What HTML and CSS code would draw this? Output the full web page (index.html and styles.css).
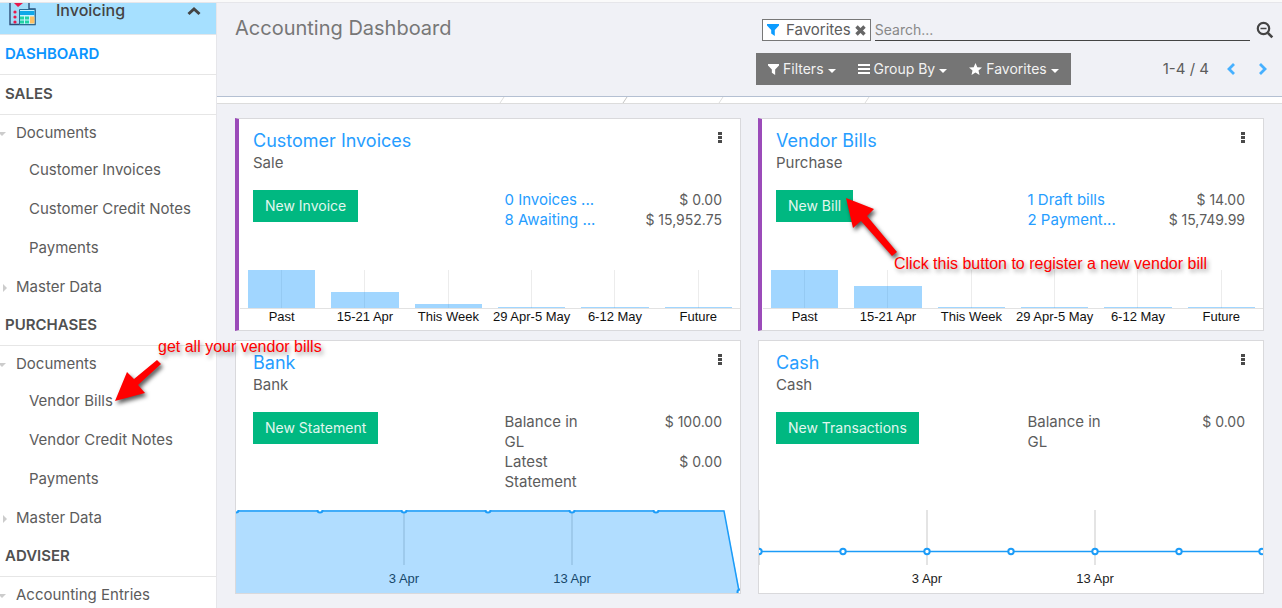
FILE: index.html
```html
<!DOCTYPE html>
<html lang="en">
<head>
<meta charset="utf-8">
<title>Accounting Dashboard</title>
<link rel="stylesheet" href="styles.css">
</head>
<body>
<div class="app">
  <nav class="sidebar">
    <button class="app-head" type="button">
      <svg class="app-icon" width="28" height="24" viewBox="0 0 28 24">
        <path d="M1 0V21.500H26V6H20V0" fill="#a3ddf8" stroke="#2b4d77" stroke-width="1.400"/>
        <path d="M5 0H14L9 4Z" fill="#e8174b"/>
        <g fill="#e8174b"><circle cx="6" cy="9" r="1.600"/><circle cx="6" cy="14" r="1.600"/><circle cx="6" cy="19" r="1.600"/></g>
        <path d="M10.500 21.500V6.500H26V21.500Z" fill="#c8f2ff" stroke="#2b6b95"/>
        <path d="M11 8H25.500V12H11Z" fill="#10a8e8"/>
        <g fill="#22d3a4"><path d="M11 13.500h4v3h-4zM16 13.500h4v3h-4zM11 17.500h4v3h-4zM16 17.500h4v3h-4z"/></g>
        <path d="M21 13.500h4.500v7H21z" fill="#ffc061"/>
      </svg>
      <span class="app-name">Invoicing</span>
      <svg width="14" height="10" viewBox="0 0 14 10"><path d="M1.500 8L7 3L12.500 8" fill="none" stroke="#444" stroke-width="3"/></svg>
    </button>
    <a class="section active" href="#">DASHBOARD</a>
    <a class="section" href="#">SALES</a>
    <a class="group open" href="#">Documents</a>
    <a class="item" href="#">Customer Invoices</a>
    <a class="item" href="#">Customer Credit Notes</a>
    <a class="item" href="#">Payments</a>
    <a class="group" href="#">Master Data</a>
    <a class="section" href="#">PURCHASES</a>
    <a class="group open" href="#">Documents</a>
    <a class="item" href="#">Vendor Bills</a>
    <a class="item" href="#">Vendor Credit Notes</a>
    <a class="item" href="#">Payments</a>
    <a class="group" href="#">Master Data</a>
    <a class="section" href="#">ADVISER</a>
    <a class="group open" href="#">Accounting Entries</a>
  </nav>

  <main class="main">
    <header class="control">
      <h1 class="page-title">Accounting Dashboard</h1>
      <div class="tools">
        <div class="search">
          <span class="facet">
            <svg width="12" height="12" viewBox="0 0 12 12"><path d="M0 0H12V1.500L7.800 6V12L4.200 9.500V6L0 1.500Z" fill="#0c9cff"/></svg>
            <span class="facet-name">Favorites</span>
            <button class="icon-btn" type="button" aria-label="Remove"><svg width="11" height="11" viewBox="0 0 11 11"><path d="M1.500 1.500L9.500 9.500M9.500 1.500L1.500 9.500" stroke="#666" stroke-width="3.400"/></svg></button>
          </span>
          <input class="search-input" type="text" placeholder="Search..." aria-label="Search">
          <button class="icon-btn zoom" type="button" aria-label="Advanced search"><svg width="18" height="18" viewBox="0 0 18 18" fill="none" stroke="#444"><circle cx="7.500" cy="7.500" r="5.700" stroke-width="2.200"/><path d="M4.500 7.500H10.500" stroke-width="1.500"/><path d="M11.800 11.800L16.300 16.300" stroke-width="2.600"/></svg></button>
        </div>
        <div class="options">
          <div class="filters">
            <button class="filter" type="button"><svg width="11" height="11" viewBox="0 0 12 12"><path d="M0 0H12V1.500L7.800 6V12L4.200 9.500V6L0 1.500Z" fill="#fff"/></svg>Filters<i class="caret"></i></button>
            <button class="filter" type="button"><svg width="12" height="10" viewBox="0 0 12 10"><path d="M0 1H12M0 5H12M0 9H12" stroke="#fff" stroke-width="2"/></svg>Group By<i class="caret"></i></button>
            <button class="filter" type="button"><svg width="13" height="12" viewBox="0 0 13 12"><path d="M6.500 0L8.300 4.200L13 4.600L9.500 7.500L10.500 12L6.500 9.600L2.500 12L3.500 7.500L0 4.600L4.700 4.200Z" fill="#fff"/></svg>Favorites<i class="caret"></i></button>
          </div>
          <div class="pager">
            <span class="count">1-4 / 4</span>
            <button class="icon-btn" type="button" aria-label="Previous"><svg width="9" height="12" viewBox="0 0 9 12"><path d="M7 1L2 6L7 11" fill="none" stroke="#46b0ff" stroke-width="2.800"/></svg></button>
            <button class="icon-btn next" type="button" aria-label="Next"><svg width="9" height="12" viewBox="0 0 9 12"><path d="M2 1L7 6L2 11" fill="none" stroke="#46b0ff" stroke-width="2.800"/></svg></button>
          </div>
        </div>
      </div>
    </header>
    <svg class="strip" viewBox="0 0 1065 6" preserveAspectRatio="none"><path d="M283 6L287 0M502 6L506 0M648 6L652 0" stroke="#ddd" fill="none"/><path d="M406 6L410 0" stroke="#c4c4c4" fill="none"/></svg>

    <div class="cards">
      <section class="card marked">
        <div class="card-head"><div><a class="title" href="#">Customer Invoices</a><p class="kind">Sale</p></div><button class="dots" type="button" aria-label="More"><i></i><i></i><i></i></button></div>
        <div class="card-body">
          <div><button class="primary" type="button">New Invoice</button></div>
          <div class="figures">
            <div class="figure"><a class="label" href="#">0 Invoices ...</a><span>$ 0.00</span></div>
            <div class="figure"><a class="label" href="#">8 Awaiting ...</a><span>$ 15,952.75</span></div>
          </div>
        </div>
        <div class="bars">
          <div class="col"><div class="plot"><div class="bar" style="height:38px"></div></div><span>Past</span></div>
          <div class="col"><div class="plot"><div class="bar" style="height:16px"></div></div><span>15-21 Apr</span></div>
          <div class="col"><div class="plot"><div class="bar" style="height:4px"></div></div><span>This Week</span></div>
          <div class="col"><div class="plot"><div class="bar" style="height:1px"></div></div><span>29 Apr-5 May</span></div>
          <div class="col"><div class="plot"><div class="bar" style="height:1px"></div></div><span>6-12 May</span></div>
          <div class="col"><div class="plot"><div class="bar" style="height:1px"></div></div><span>Future</span></div>
        </div>
      </section>

      <section class="card marked">
        <div class="card-head"><div><a class="title" href="#">Vendor Bills</a><p class="kind">Purchase</p></div><button class="dots" type="button" aria-label="More"><i></i><i></i><i></i></button></div>
        <div class="card-body">
          <div><button class="primary" type="button">New Bill</button></div>
          <div class="figures">
            <div class="figure"><a class="label" href="#">1 Draft bills</a><span>$ 14.00</span></div>
            <div class="figure"><a class="label" href="#">2 Payment...</a><span>$ 15,749.99</span></div>
          </div>
        </div>
        <div class="bars">
          <div class="col"><div class="plot"><div class="bar" style="height:38px"></div></div><span>Past</span></div>
          <div class="col"><div class="plot"><div class="bar" style="height:22px"></div></div><span>15-21 Apr</span></div>
          <div class="col"><div class="plot"><div class="bar" style="height:1px"></div></div><span>This Week</span></div>
          <div class="col"><div class="plot"><div class="bar" style="height:1px"></div></div><span>29 Apr-5 May</span></div>
          <div class="col"><div class="plot"><div class="bar" style="height:1px"></div></div><span>6-12 May</span></div>
          <div class="col"><div class="plot"><div class="bar" style="height:1px"></div></div><span>Future</span></div>
        </div>
      </section>

      <section class="card">
        <div class="card-head"><div><a class="title" href="#">Bank</a><p class="kind">Bank</p></div><button class="dots" type="button" aria-label="More"><i></i><i></i><i></i></button></div>
        <div class="card-body tall">
          <div><button class="primary" type="button">New Statement</button></div>
          <div class="figures">
            <div class="figure"><span class="label">Balance in GL</span><span>$ 100.00</span></div>
            <div class="figure"><span class="label">Latest Statement</span><span>$ 0.00</span></div>
          </div>
        </div>
        <svg class="line-chart" viewBox="0 0 504 83">
          <g class="tick"><path d="M168 0V55M336 0V55"/></g>
          <text x="168" y="73">3 Apr</text><text x="336" y="73">13 Apr</text>
          <path d="M0 0H488L504 83H0Z" fill="#0c95ff" fill-opacity=".32"/>
          <path class="series" d="M0 1H488L503 81"/>
          <g class="point"><circle cx="0" cy="0" r="2.500"/><circle cx="84" cy="0" r="2.500"/><circle cx="168" cy="0" r="2.500"/><circle cx="252" cy="0" r="2.500"/><circle cx="336" cy="0" r="2.500"/><circle cx="420" cy="0" r="2.500"/><circle cx="504" cy="82" r="2.500"/></g>
        </svg>
      </section>

      <section class="card">
        <div class="card-head"><div><a class="title" href="#">Cash</a><p class="kind">Cash</p></div><button class="dots" type="button" aria-label="More"><i></i><i></i><i></i></button></div>
        <div class="card-body tall">
          <div><button class="primary" type="button">New Transactions</button></div>
          <div class="figures">
            <div class="figure"><span class="label">Balance in GL</span><span>$ 0.00</span></div>
          </div>
        </div>
        <svg class="line-chart" viewBox="0 0 504 83">
          <g class="tick"><path d="M0 0V55M168 0V55M336 0V55"/></g>
          <text x="168" y="73">3 Apr</text><text x="336" y="73">13 Apr</text>
          <path class="series" d="M0 41.500H504"/>
          <g class="point"><circle cx="0" cy="41.500" r="2.700"/><circle cx="84" cy="41.500" r="2.700"/><circle cx="168" cy="41.500" r="2.700"/><circle cx="252" cy="41.500" r="2.700"/><circle cx="336" cy="41.500" r="2.700"/><circle cx="420" cy="41.500" r="2.700"/><circle cx="503" cy="41.500" r="2.700"/></g>
        </svg>
      </section>
    </div>
  </main>

  <svg class="arrow arrow-menu" width="46" height="42" viewBox="0 0 46 42"><path d="M0 42L12 13L19 20L42 1L46 5L23 26L30 34Z"/></svg>
  <p class="note note-menu">get all your vendor bills</p>
  <svg class="arrow arrow-bill" width="52" height="58" viewBox="0 0 52 58"><path d="M0 0L28 11L21 18L51 54L46 58L15 23L7 30Z"/></svg>
  <p class="note note-bill">Click this button to register a new vendor bill</p>
</div>
</body>
</html>
```
FILE: styles.css
```css
* { box-sizing: border-box; }
body { margin: 0; overflow: hidden; background: #f0f1f6; color: #5c5c5c; font: 14px/20px Inter, "Noto Sans", sans-serif; }
a { color: inherit; text-decoration: none; }
p, h1 { margin: 0; font-weight: 400; }
button { font: inherit; color: inherit; border: 0; padding: 0; background: none; cursor: pointer; }
svg { flex: none; }
.app { position: relative; display: flex; height: 100vh; overflow: hidden; border-top: 2px solid #fafafa; }

.sidebar { flex: 0 0 217px; display: flex; flex-direction: column; background: #fff; border-right: 1px solid #e6e6ea; border-top: 1px solid #e6e6ea; }
.sidebar > * { flex: none; }
.app-head { display: flex; align-items: flex-start; height: 32px; padding: 0 15px 0 9px; background: #a6e0ff; border-bottom: 1px solid #e2e6ea; }
.app-head > svg:last-child { margin-top: 3px; }
.app-name { flex: 1; margin-left: 19px; margin-top: -3px; font-size: 16px; font-weight: 500; color: #444; text-align: left; }
.section { height: 40px; padding-left: 5px; line-height: 38px; font-size: 15px; font-weight: 600; color: #505050; border-bottom: 1px solid #e6e6e6; }
.active { color: #0c95ff; }
.group { position: relative; height: 37px; padding-left: 16px; font-size: 15px; line-height: 36px; }
.group::before { content: ""; position: absolute; left: 3px; top: 15px; border: 4px solid transparent; border-left-color: #ccc; border-right: 0; }
.open::before { left: -2px; top: 17px; border: 4px solid transparent; border-top-color: #ccc; border-bottom: 0; }
.item { height: 39px; padding-left: 29px; font-size: 15px; line-height: 36px; }

.main { flex: 1; min-width: 0; border-top: 1px solid #e6e6ea; }
.control { display: flex; justify-content: space-between; min-height: 94px; padding: 14px 8px 0 18px; border-bottom: 1px solid #b4c0d2; }
.page-title { font-size: 20px; line-height: 22px; color: #777; }
.tools { flex: 0 0 518px; }
.search { display: flex; align-items: center; margin-left: 6px; padding-top: 2px; }
.facet { display: flex; align-items: center; height: 22px; padding: 0 4px; background: #fff; border: 1px solid #777; }
.facet-name { margin: 0 4px 0 7px; font-size: 15px; }
.icon-btn { display: flex; align-items: center; }
.search-input { flex: 1; min-width: 0; height: 22px; margin: 0 6px 0 4px; padding: 0; border: 0; border-bottom: 1px solid #444; background: none; font: inherit; outline: none; }
.search-input::placeholder { color: #888; opacity: 1; }
.options { display: flex; justify-content: space-between; align-items: center; margin-top: 12px; }
.filters { display: flex; gap: 22px; height: 32px; padding: 0 12px; background: #757575; color: #f2f2f2; }
.filter { display: flex; align-items: center; gap: 4px; }
.caret { margin-top: 3px; border: 4px solid transparent; border-top-color: #fff; border-bottom: 0; }
.pager { display: flex; align-items: center; }
.count { margin-right: 18px; font-size: 15px; }
.next { margin: 0 7px 0 22px; }
.strip { display: block; width: 100%; height: 7px; background: #fff; border-bottom: 1px solid #dcdcdc; }

.cards { display: grid; grid-template-columns: 1fr 1fr; gap: 9px 17px; padding: 14px 18px; }
.card { display: flex; flex-direction: column; background: #fff; border: 1px solid #d9d9dc; padding-top: 10px; }
.marked { border-left: 4px solid #9b4bb9; }
.card-head { display: flex; justify-content: space-between; align-items: flex-start; padding: 0 18px 0 17px; }
.marked .card-head, .marked .card-body { padding-left: 14px; }
.title { display: block; font-size: 18px; line-height: 24px; color: #269dff; }
.kind { font-size: 15px; line-height: 20px; }
.dots { display: flex; flex-direction: column; gap: 1px; padding: 3px 0; }
.dots i { width: 4px; height: 3px; background: #4a4a4a; }
.card-body { display: grid; grid-template-columns: 1fr 1fr; gap: 34px; min-height: 80px; margin-top: 17px; padding: 0 18px 0 17px; }
.tall { min-height: 98px; }
.primary { height: 32px; padding: 0 12px; background: #00b881; color: #e2f7ef; }
.figure { display: flex; justify-content: space-between; align-items: flex-start; }
.label { max-width: 92px; font-size: 15px; }
a.label { color: #269dff; }
.bars { display: flex; padding-left: 1px; }
.col { flex: 1 1 0; text-align: center; color: #111; font: 13px/16px "Liberation Sans", Arial, sans-serif; white-space: nowrap; }
.col > span { display: block; height: 21px; }
.plot { display: flex; justify-content: center; align-items: flex-end; height: 39px; border-bottom: 1px solid #e2e2e2; background: linear-gradient(#ececec, #ececec) center / 1px 100% no-repeat; }
.bar { width: 81%; background: rgba(12, 149, 255, .39); }
.line-chart { display: block; width: 100%; height: auto; }
.line-chart text { font: 13px "Liberation Sans", Arial, sans-serif; text-anchor: middle; fill: #222; }
.tick { stroke: #e4e4e4; stroke-width: 2; }
.series { fill: none; stroke: #1c9cf8; stroke-width: 1.5; }
.point { fill: #fff; stroke: #1c9cf8; stroke-width: 2; }

.note { position: absolute; color: #f00; font: 16px/20px "Liberation Sans", Arial, sans-serif; white-space: nowrap; text-shadow: 2px 3px 4px rgba(0, 0, 0, .4); }
.note-menu { left: 158px; top: 335px; }
.note-bill { left: 894px; top: 252px; }
.arrow { position: absolute; overflow: visible; fill: #f00; filter: drop-shadow(2px 3px 2px rgba(0, 0, 0, .65)); }
.arrow-menu { left: 115px; top: 357px; }
.arrow-bill { left: 846px; top: 196px; }
```
